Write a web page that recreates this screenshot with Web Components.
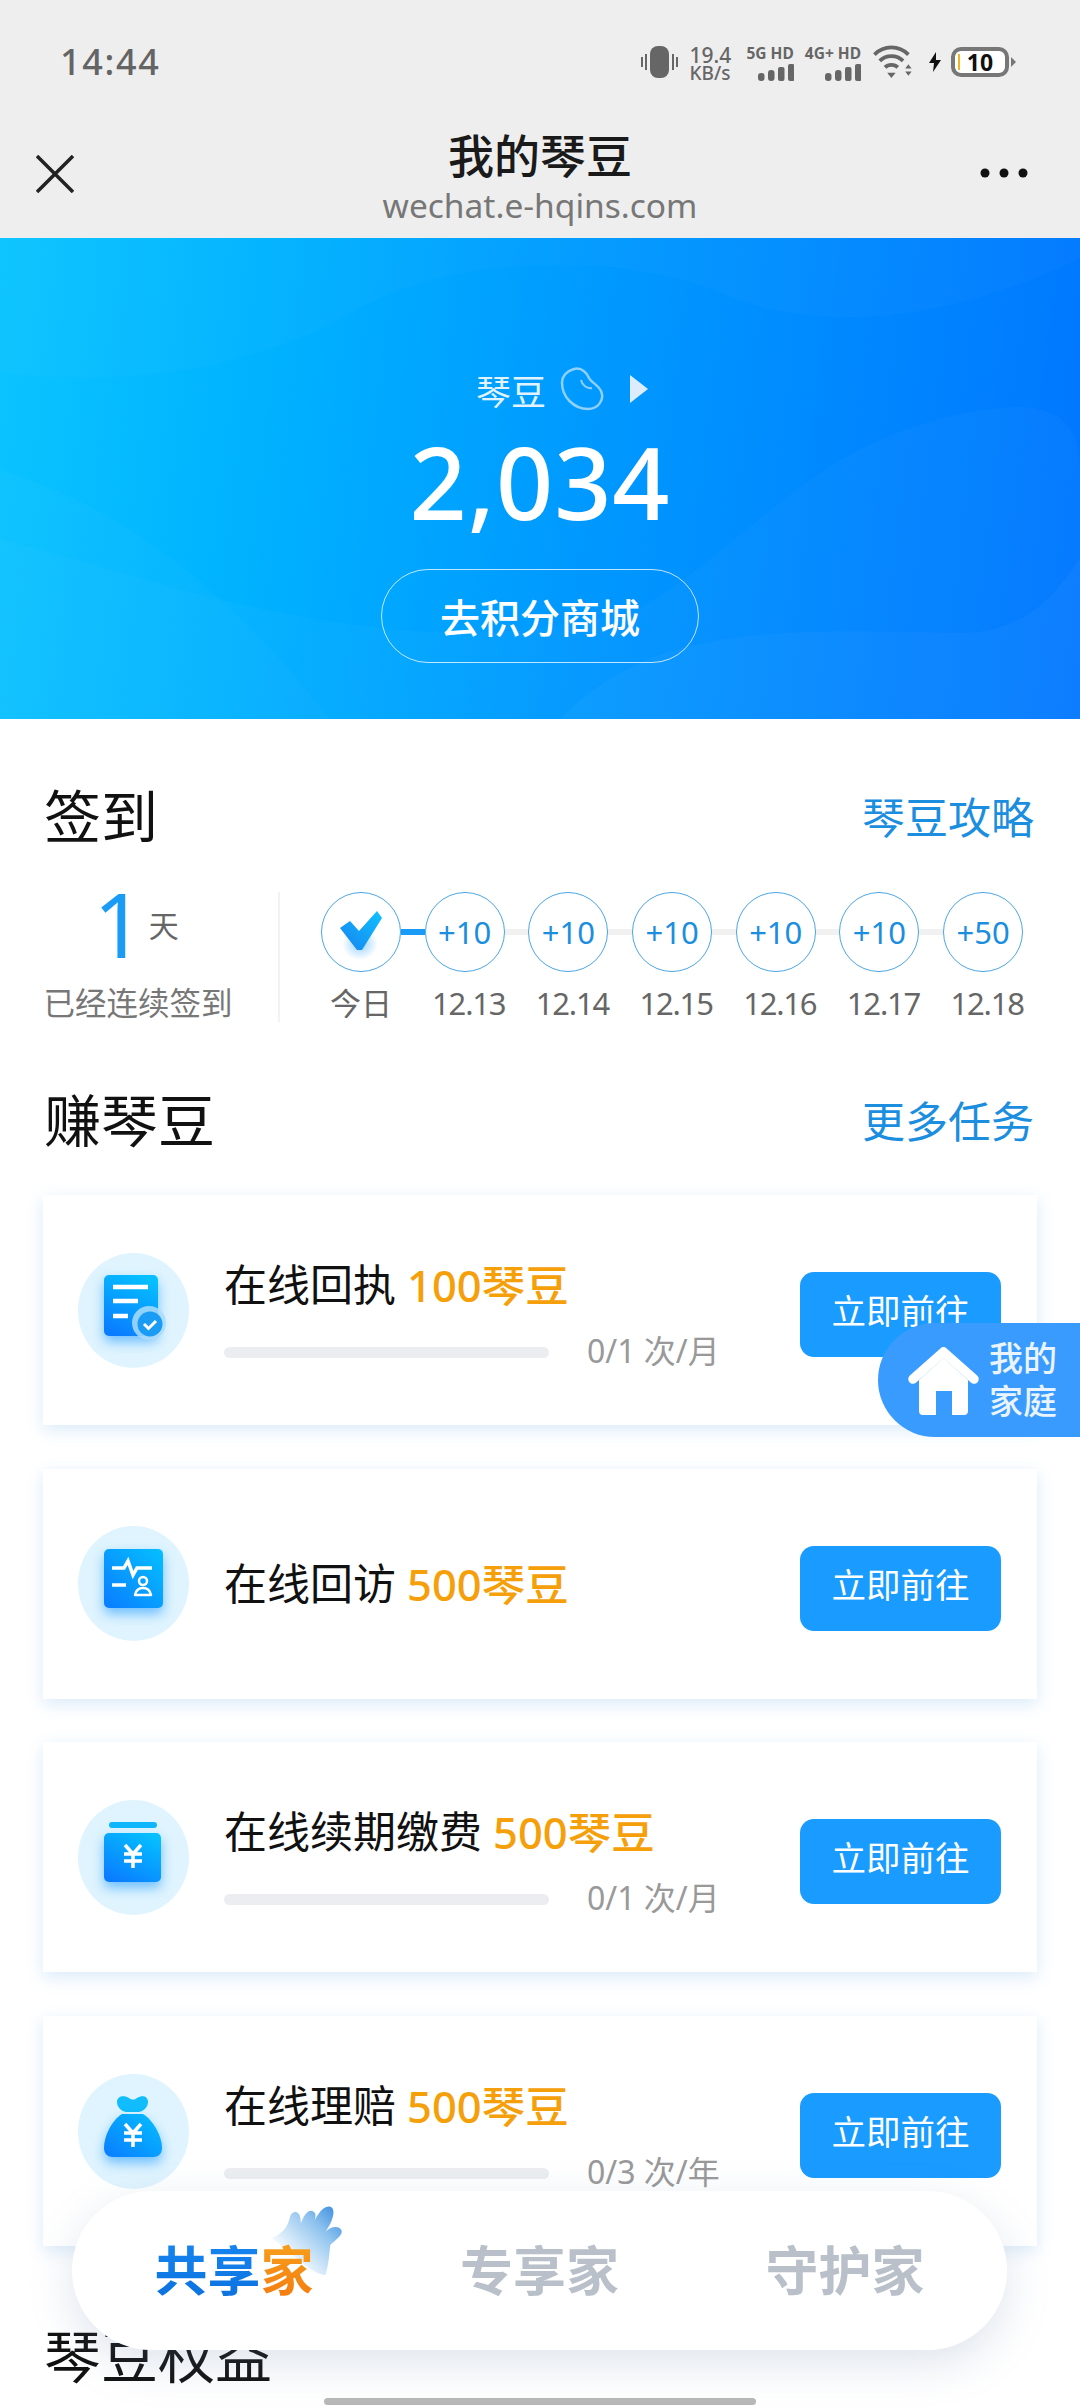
<!DOCTYPE html>
<html lang="zh-CN">
<head>
<meta charset="utf-8">
<title>我的琴豆</title>
<style>
html,body{margin:0;padding:0;background:#fff}
body{font-family:"Noto Sans","Noto Sans CJK SC",sans-serif;width:1080px;height:2408px;overflow:hidden}
</style>
</head>
<body>
<app-page>
  <status-bar></status-bar>
  <nav-header></nav-header>
  <hero-panel></hero-panel>
  <section-head style="margin-top:62px" link="琴豆攻略">签到</section-head>
  <sign-in></sign-in>
  <section-head style="margin-top:60px" link="更多任务">赚琴豆</section-head>
  <task-list>
    <task-card reward="100琴豆" count="0/1 次/月">
      <svg slot="icon" width="111" height="115" viewBox="0 0 111 115">
        <defs><linearGradient id="g1" x1="0.7" y1="0" x2="0.3" y2="1"><stop offset="0" stop-color="#05c0ff"/><stop offset="1" stop-color="#0a7cff"/></linearGradient></defs>
        <rect x="26" y="22" width="54" height="61" rx="5" fill="url(#g1)" style="filter:drop-shadow(0 6px 6px rgba(0,140,255,.5))"/>
        <path d="M35 34H70M35 48H60M35 63H50" stroke="#fff" stroke-width="4.500" fill="none"/>
        <circle cx="71" cy="70" r="17" fill="#a9dcfb" opacity=".85"/>
        <circle cx="72" cy="71" r="12.500" fill="#1a9cf5"/>
        <path d="M66 71l4.500 4.500 7.500-7.500" stroke="#fff" stroke-width="3" fill="none"/>
      </svg>
      在线回执
    </task-card>
    <task-card reward="500琴豆">
      <svg slot="icon" width="111" height="115" viewBox="0 0 111 115">
        <defs><linearGradient id="g2" x1="1" y1="0" x2="0" y2="1"><stop offset="0" stop-color="#05c0ff"/><stop offset="1" stop-color="#0a7cff"/></linearGradient></defs>
        <rect x="26" y="23" width="59" height="59" rx="5" fill="url(#g2)" style="filter:drop-shadow(0 6px 6px rgba(0,140,255,.5))"/>
        <path d="M34 42H46L50 35 55 49 59 42H74M34 59H48" stroke="#fff" stroke-width="3.500" fill="none"/>
        <circle cx="65" cy="55" r="4" fill="none" stroke="#fff" stroke-width="2.500"/>
        <path d="M57 69c1-5 4-7 8-7s7 2 8 7z" fill="none" stroke="#fff" stroke-width="2.500" stroke-linejoin="round"/>
      </svg>
      在线回访
    </task-card>
    <task-card reward="500琴豆" count="0/1 次/月">
      <svg slot="icon" width="111" height="115" viewBox="0 0 111 115">
        <defs><linearGradient id="g3" x1="0.8" y1="0" x2="0.2" y2="1"><stop offset="0" stop-color="#05c0ff"/><stop offset="1" stop-color="#0a7cff"/></linearGradient></defs>
        <rect x="31" y="22" width="48" height="6" rx="3" fill="#0fb6fb"/>
        <rect x="26" y="33" width="57" height="49" rx="5" fill="url(#g3)" style="filter:drop-shadow(0 6px 6px rgba(0,140,255,.5))"/>
        <path d="M47 45l8 9 8-9M46 54H64M46 61H64M55 54V68" stroke="#fff" stroke-width="3.500" fill="none"/>
      </svg>
      在线续期缴费
    </task-card>
    <task-card reward="500琴豆" count="0/3 次/年">
      <svg slot="icon" width="111" height="115" viewBox="0 0 111 115">
        <defs><linearGradient id="g4" x1="1" y1="0" x2="0" y2="1"><stop offset="0" stop-color="#05c0ff"/><stop offset="1" stop-color="#0a7cff"/></linearGradient></defs>
        <path d="M39 28c0-6 7-7 12-4 3 2 5 2 8 0 5-3 11-2 11 4 0 5-4 9-9 10H48c-5-1-9-5-9-10z" fill="#11bdfc"/>
        <path d="M44 40H65c10 6 19 22 19 34 0 6-4 9-9 9H35c-5 0-9-3-9-9 0-12 8-28 18-34z" fill="url(#g4)" style="filter:drop-shadow(0 6px 6px rgba(0,140,255,.5))"/>
        <path d="M47 50l8 9 8-9M46 59H64M46 66H64M55 59V73" stroke="#fff" stroke-width="3.500" fill="none"/>
      </svg>
      在线理赔
    </task-card>
  </task-list>
  <section-head style="margin-top:75px">琴豆权益</section-head>
  <float-home></float-home>
  <bottom-tabs></bottom-tabs>
  <home-indicator></home-indicator>
</app-page>

<script>
function def(name, html){
  customElements.define(name, class extends HTMLElement{
    constructor(){super();this.attachShadow({mode:'open'});}
    connectedCallback(){
      this.shadowRoot.innerHTML = typeof html==='function' ? html(this) : html;
    }
  });
}
const FONT = '"Noto Sans","Noto Sans CJK SC",sans-serif';
const BARS = '<svg width="36" height="17" viewBox="0 0 36 17"><rect x="0" y="9" width="6.500" height="8" rx="3" fill="#666"/><rect x="10" y="6" width="6.500" height="11" rx="3" fill="#666"/><rect x="20" y="3" width="6.500" height="14" rx="2" fill="#666"/><rect x="30" y="0" width="6.500" height="17" rx="2" fill="#666"/></svg>';

def('app-page', `<style>
:host{display:block;position:relative;width:1080px;height:2408px;overflow:hidden;background:#fff;font-family:${FONT}}
</style><slot></slot>`);

def('status-bar', `<style>
:host{display:flex;align-items:center;height:90px;padding:34px 64px 0 60px;box-sizing:border-box;background:#eee;color:#666}
.time{font-size:36px;font-weight:500;letter-spacing:1.700px;line-height:40px;flex:1;color:#646464}
.r{display:flex;align-items:center}
.sp{display:flex;flex-direction:column;font-size:19px;line-height:18px;width:46px;margin-left:11px;font-weight:500;color:#666;padding-top:4px}
.sp b{font-weight:500;font-size:21px}
.net{display:flex;flex-direction:column;align-items:flex-end;font-size:15.500px;font-weight:700;line-height:15px;margin-left:11px;color:#666;white-space:nowrap;padding-top:2px}
.net svg{margin-top:3px}
.bat{margin-left:9px;width:58px;height:30px;box-sizing:border-box;border:4px solid #777;border-radius:10px;background:#fff;display:flex;align-items:center;justify-content:center;color:#111;font-size:23px;font-weight:700;position:relative;line-height:22px}
.bat i{position:absolute;left:3px;top:3px;bottom:3px;width:2px;background:#f0b429}
</style>
<div class="time">14:44</div>
<div class="r">
<svg width="37" height="32" viewBox="0 0 37 32"><rect x="9" y="0" width="19" height="32" rx="8" fill="#666"/><path d="M1 11v10M5 8v16M32 8v16M36 11v10" stroke="#666" stroke-width="2"/></svg>
<div class="sp"><b>19.4</b><span>KB/s</span></div>
<div class="net"><span>5G HD</span>${BARS}</div>
<div class="net"><span>4G+ HD</span>${BARS}</div>
<svg style="margin-left:12px" width="40" height="34" viewBox="0 0 37 32"><g fill="none" stroke="#666" stroke-width="3.500"><path d="M1 9c9-9 23-9 32 0"/><path d="M6 15c6-6 16-6 22 0"/><path d="M11 21c3-3 9-3 12 0"/></g><path d="M13 26h8l-4 5zM30 22l3-4 3 4zM30 25h6l-3 4z" fill="#666"/></svg>
<svg style="margin-left:15px" width="14" height="20" viewBox="0 0 14 20"><path d="M8 0L1 11h5l-1 9 8-12H8z" fill="#111"/></svg>
<div class="bat"><i></i>10</div>
<svg style="margin-left:2px" width="5" height="10" viewBox="0 0 5 10"><path d="M0 0l5 5-5 5z" fill="#777"/></svg>
</div>`);

def('nav-header', `<style>
:host{display:block;position:relative;height:148px;background:#eee}
.c{display:flex;flex-direction:column;align-items:center;padding-top:37px}
.t{font-size:46px;line-height:56px;font-weight:500;color:#1a1a1a}
.u{font-size:33.500px;line-height:50px;color:#777;margin-top:-3px}
.x{position:absolute;left:36px;top:65px}
.d{position:absolute;left:979px;top:76px}
</style>
<svg class="x" width="38" height="38" viewBox="0 0 38 38"><path d="M1 1L37 37M37 1L1 37" stroke="#222" stroke-width="3.500"/></svg>
<svg class="d" width="50" height="14" viewBox="0 0 50 14"><circle cx="6" cy="7" r="4.500" fill="#111"/><circle cx="25" cy="7" r="4.500" fill="#111"/><circle cx="44" cy="7" r="4.500" fill="#111"/></svg>
<div class="c"><div class="t">我的琴豆</div><div class="u">wechat.e-hqins.com</div></div>`);

def('hero-panel', `<style>
:host{display:flex;flex-direction:column;align-items:center;position:relative;height:481px;box-sizing:border-box;padding-top:126px;color:#fff;overflow:hidden;
background:linear-gradient(97deg,#0bc4ff 0%,#00b2ff 25%,#0098ff 55%,#0076ff 100%)}
svg.bg{position:absolute;left:0;top:0}
.lab{position:relative;display:flex;align-items:center;height:50px;font-size:35px;color:#e2f3ff;transform:translateX(22px)}
.lab svg{display:block}
.num{position:relative;margin-top:7px;font-size:100px;line-height:120px;font-weight:500;letter-spacing:1px;color:#fff}
.btn{position:relative;margin-top:28px;width:318px;height:94px;box-sizing:border-box;border:1px solid rgba(255,255,255,.75);border-radius:47px;display:flex;align-items:center;justify-content:center;font-size:40px;color:#fff;font-weight:500}
</style>
<svg class="bg" width="1080" height="481" viewBox="0 0 1080 481">
<path d="M0 135C130 150 260 130 360 70 470 10 640 20 720 55 850 110 1000 60 1080 20V0H0z" fill="#fff" opacity=".018"/>
<path d="M0 232C110 265 220 340 330 481H0z" fill="#fff" opacity=".025"/>
<path d="M0 481V300C240 370 430 430 640 370 760 300 820 190 1000 170 1050 165 1080 180 1080 230V481z" fill="#fff" opacity=".025"/>
<path d="M560 481C650 390 760 390 960 395 1030 395 1060 350 1080 320V481z" fill="#fff" opacity=".03"/>
</svg>
<div class="lab">琴豆
<svg style="margin-left:14px" width="44" height="44" viewBox="0 0 44 44"><path d="M14 2C22 0 27 6 29 11 31 15 38 18 41 24 45 33 38 42 28 42 14 42 2 30 2 16 2 9 7 4 14 2Z" fill="none" stroke="#8fd0ff" stroke-width="2.500"/><path d="M21 13C22 18 27 22 32 21" fill="none" stroke="#8fd0ff" stroke-width="2"/></svg>
<svg style="margin-left:26px" width="18" height="28" viewBox="0 0 18 28"><path d="M0 0l18 14L0 28z" fill="#dcecfb"/></svg>
</div>
<div class="num">2,034</div>
<div class="btn">去积分商城</div>`);

def('section-head', h=>`<style>
:host{display:flex;align-items:center;justify-content:space-between;height:70px;padding:0 46px 0 44px}
.t{font-size:57px;line-height:70px;color:#111}
.l{font-size:43px;line-height:70px;color:#1b8ee0;padding-top:4px}
</style><div class="t"><slot></slot></div>${h.getAttribute('link')?`<div class="l">${h.getAttribute('link')}</div>`:''}`);

def('sign-in', ()=>{
  const days=[['+10','12.13'],['+10','12.14'],['+10','12.15'],['+10','12.16'],['+10','12.17'],['+50','12.18']];
  let circles=`<div class="ci"><svg width="52" height="56" viewBox="0 0 52 56" style="overflow:visible"><defs><linearGradient id="ck" x1="1" y1="0" x2="0" y2="1"><stop offset="0" stop-color="#0fc2ff"/><stop offset="1" stop-color="#1683f0"/></linearGradient><radialGradient id="gl"><stop offset="0" stop-color="#7cc6ff" stop-opacity=".8"/><stop offset="1" stop-color="#7cc6ff" stop-opacity="0"/></radialGradient></defs><ellipse cx="25" cy="40" rx="18" ry="16" fill="url(#gl)"/><path d="M5 24L15 17 24 27 42 7 47 14 27 46H22z" fill="url(#ck)"/></svg></div>`;
  days.forEach((d,i)=>{circles+=`<div class="ln ${i==0?'on':''}"></div><div class="ci">${d[0]}</div>`;});
  let labs=`<div>今日</div>`+days.map(d=>`<div class="dt">${d[1]}</div>`).join('');
  return `<style>
:host{display:flex;margin-top:41px;height:133px;color:#666}
.left{margin-left:44px;width:188px;padding-right:46px;border-right:2px solid #f3f3f3;height:130px}
.n{display:flex;align-items:center;justify-content:center;height:63px;margin-bottom:26px;padding-right:4px}
.n b{font-weight:400;font-size:90px;line-height:63px;color:#1a9bf5}
.n span{font-size:30px;margin-left:4px;color:#666}
.sub{font-size:31.500px;line-height:44px;white-space:nowrap;color:#777;display:flex;justify-content:center}
.days{margin-left:41px;width:706px}
.row{display:flex;align-items:center}
.ci{box-sizing:border-box;width:80px;height:80px;border-radius:50%;border:1.500px solid #4aa6e4;display:flex;align-items:center;justify-content:center;font-size:31px;color:#1b8ee0;background:#fff;flex:none}
.ln{width:23.700px;height:6px;background:#f1f1f1;flex:none}
.ln.on{background:#1a9bf5}
.labs{display:grid;grid-template-columns:repeat(7,80px);column-gap:23.700px;margin-top:9px;font-size:31px;line-height:44px;color:#666;text-align:center;white-space:nowrap}
.labs .dt{padding-left:8px;display:flex;justify-content:center;letter-spacing:-1.200px}
</style>
<div class="left"><div class="n"><b>1</b><span>天</span></div><div class="sub">已经连续签到</div></div>
<div class="days"><div class="row">${circles}</div><div class="labs">${labs}</div></div>`;
});

def('task-list', `<style>:host{display:flex;flex-direction:column;gap:43.700px;margin-top:40px;padding:0 43px}</style><slot></slot>`);

def('task-card', h=>{
  const c=h.getAttribute('count');
  return `<style>
:host{display:flex;align-items:center;height:230px;background:#fff;box-shadow:0 5px 16px rgba(70,150,225,.2);flex:none}
.ic{width:111px;height:115px;border-radius:50%;background:#dff4fe;margin-left:35px;flex:none}
.ic ::slotted(svg){display:block}
.col{margin-left:35px;width:500px;flex:none;${c?'padding-bottom:7px':''}}
.t{font-size:43px;line-height:60px;color:#111;display:flex;white-space:nowrap}
.t em{font-style:normal;color:#f59f0a;margin-left:11px;font-size:43.500px;font-weight:500}
.p{display:flex;align-items:center;height:11px;margin-top:32px}
.bar{width:325px;height:11px;border-radius:6px;background:#ebedf0;flex:none}
.c{margin-left:38px;font-size:32px;line-height:44px;color:#999;white-space:nowrap;padding-bottom:4px}
.b{width:201px;height:85px;border-radius:14px;background:#1a9bff;color:#fff;font-size:34.500px;display:flex;align-items:center;justify-content:center;box-sizing:border-box;padding-bottom:11px;margin-top:9px;margin-left:76px;flex:none}
</style>
<div class="ic"><slot name="icon"></slot></div>
<div class="col"><div class="t"><span><slot></slot></span><em>${h.getAttribute('reward')}</em></div>
${c?`<div class="p"><div class="bar"></div><div class="c">${c}</div></div>`:''}</div>
<div class="b">立即前往</div>`;
});

def('float-home', `<style>
:host{position:absolute;right:0;top:1323px;width:202px;height:114px;background:#3a9bff;border-radius:57px 0 0 57px;display:flex;align-items:center;color:#eaf4ff;box-sizing:border-box;padding-left:30px}
.t{font-size:34px;line-height:43px;margin-left:10px;font-weight:500}
</style>
<svg width="71" height="70" viewBox="0 0 71 70"><path d="M5 34L35.500 7 66 34" fill="none" stroke="#fff" stroke-width="9.500" stroke-linecap="round" stroke-linejoin="round"/><path d="M11 35L35.500 13 60 35V66a4 4 0 0 1-4 4H44V46H28V70H15a4 4 0 0 1-4-4z" fill="#fff"/></svg>
<div class="t">我的<br>家庭</div>`);

def('bottom-tabs', `<style>
:host{position:absolute;left:72px;top:2191px;width:935px;height:159px;box-sizing:border-box;padding-bottom:4px;border-radius:80px;background:#fff;box-shadow:0 14px 44px rgba(110,135,175,.22);display:grid;grid-template-columns:repeat(3,305.500px);justify-content:center;align-items:center;font-size:53px;font-weight:700;color:#b9c0ca;text-align:center}
.a{position:relative}
.a i{font-style:normal;background:linear-gradient(180deg,#1887f2,#0a6fdc);-webkit-background-clip:text;background-clip:text;-webkit-text-fill-color:transparent}
.a u{text-decoration:none;background:linear-gradient(180deg,#f7a41d,#f4770f);-webkit-background-clip:text;background-clip:text;-webkit-text-fill-color:transparent}
.h{position:absolute;left:186px;top:-25px;pointer-events:none}
.w{position:relative;display:block}
</style>
<div class="a"><svg class="h" width="75" height="70" viewBox="380 30 225 210"><defs><linearGradient id="hd" x1="1" y1="0" x2="0.1" y2="0.9"><stop offset="0" stop-color="#2f86dc"/><stop offset=".35" stop-color="#8fc3ef"/><stop offset=".75" stop-color="#e4f1fb"/><stop offset="1" stop-color="#fff" stop-opacity="0"/></linearGradient></defs><path d="M395 130C425 115 440 100 448 70 452 45 478 45 480 70L482 85C490 60 505 40 520 50 532 58 522 80 514 95 525 70 545 30 570 35 590 42 575 85 555 110 570 95 595 90 603 105 610 120 585 135 570 150 565 190 565 210 555 240 520 240 470 190 395 130Z" fill="url(#hd)"/></svg><span class="w"><i>共享</i><u>家</u></span></div>
<div>专享家</div>
<div>守护家</div>`);

def('home-indicator', `<style>:host{position:absolute;left:324px;top:2398px;width:432px;height:7px;border-radius:4px;background:#b7b7b7}</style>`);
</script>
</body>
</html>
